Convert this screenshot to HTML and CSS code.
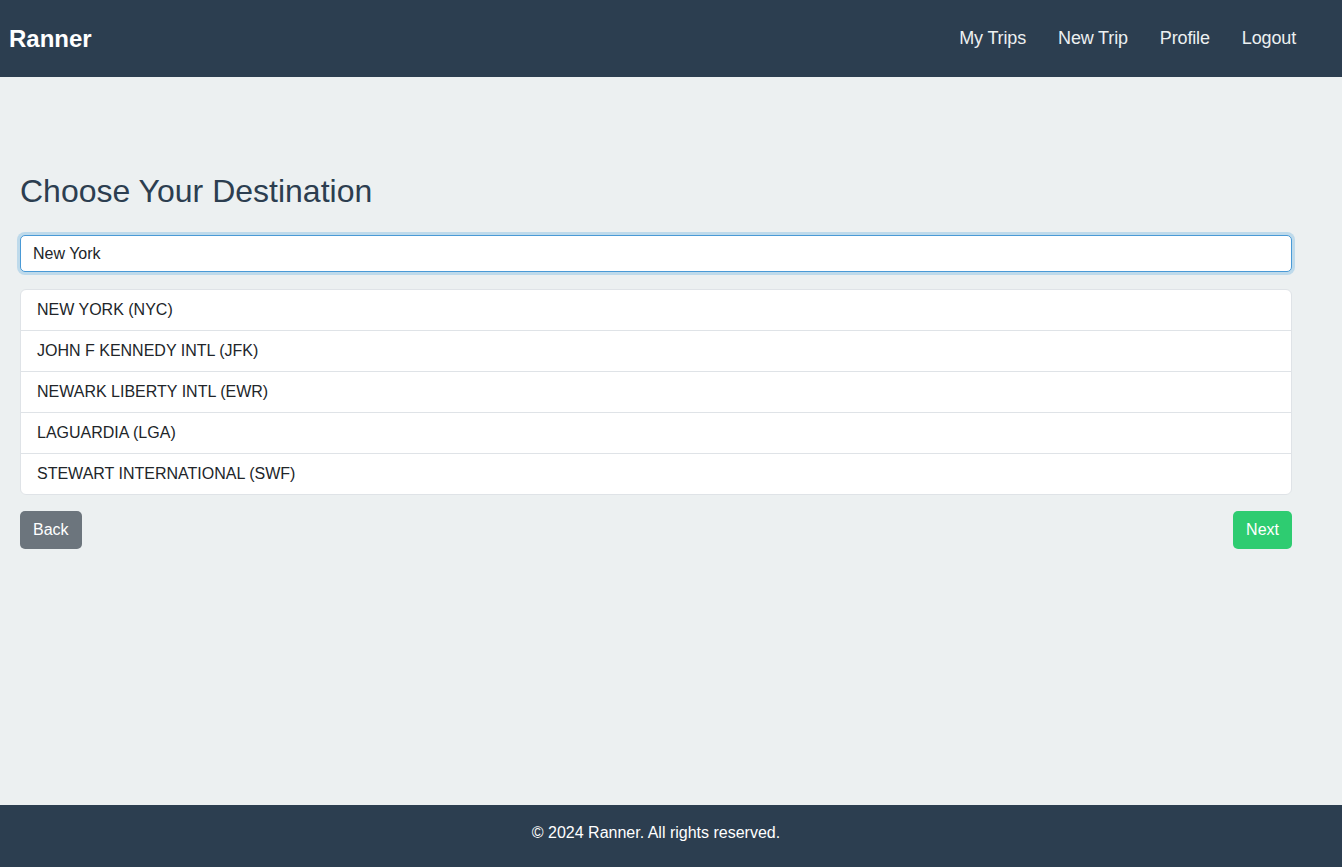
FILE: index.html
```html
<!DOCTYPE html>
<html lang="en">
<head>
<meta charset="utf-8">
<title>Ranner</title>
<link rel="stylesheet" href="styles.css">
</head>
<body>
<header class="topbar">
  <div class="brand">Ranner</div>
  <nav class="nav">
    <a href="#" class="nav-link">My Trips</a>
    <a href="#" class="nav-link">New Trip</a>
    <a href="#" class="nav-link">Profile</a>
    <a href="#" class="nav-link">Logout</a>
  </nav>
</header>
<main class="main">
  <h1 class="title">Choose Your Destination</h1>
  <input class="search" type="text" value="New York">
  <ul class="results">
    <li class="result">NEW YORK (NYC)</li>
    <li class="result">JOHN F KENNEDY INTL (JFK)</li>
    <li class="result">NEWARK LIBERTY INTL (EWR)</li>
    <li class="result">LAGUARDIA (LGA)</li>
    <li class="result">STEWART INTERNATIONAL (SWF)</li>
  </ul>
  <div class="actions">
    <button class="btn btn-back">Back</button>
    <button class="btn btn-next">Next</button>
  </div>
</main>
<footer class="footer">
  <p class="footer-text">© 2024 Ranner. All rights reserved.</p>
</footer>
</body>
</html>
```
FILE: styles.css
```css
* { box-sizing: border-box; }
html, body { margin: 0; padding: 0; }
body {
  font-family: "Liberation Sans", Arial, sans-serif;
  background: #ecf0f1;
  min-height: 100vh;
  display: flex;
  flex-direction: column;
  color: #212529;
}
.topbar {
  height: 77px;
  background: #2c3e50;
  display: flex;
  align-items: center;
  justify-content: space-between;
  padding: 0 30px 0 9px;
}
.brand {
  color: #ffffff;
  font-weight: bold;
  font-size: 24px;
}
.nav { display: flex; }
.nav-link {
  color: #ecf0f1;
  text-decoration: none;
  font-size: 18px;
  letter-spacing: -0.15px;
  padding: 0 16px;
}
.main {
  flex: 1;
  padding: 96px 50px 0 20px;
}
.title {
  margin: 0 0 25px;
  font-size: 32px;
  font-weight: normal;
  color: #2c3e50;
  line-height: 37px;
}
.search {
  display: block;
  width: 100%;
  height: 37px;
  padding: 0 12px;
  font-family: inherit;
  font-size: 16px;
  color: #212529;
  background: #fff;
  border: 1px solid #4a9ad6;
  border-radius: 5px;
  box-shadow: 0 0 0 3px rgba(52, 152, 219, 0.25);
  outline: none;
}
.results {
  list-style: none;
  margin: 17px 0 0;
  padding: 0;
  background: #fff;
  border: 1px solid #dfe3e7;
  border-radius: 6px;
}
.result {
  height: 41px;
  display: flex;
  align-items: center;
  padding: 0 16px;
  font-size: 16px;
  color: #212529;
  border-top: 1px solid #dfe3e7;
}
.result:first-child { border-top: none; height: 40px; }
.actions {
  display: flex;
  justify-content: space-between;
  margin-top: 16px;
}
.btn {
  height: 38px;
  padding: 0 13px;
  border: none;
  border-radius: 5px;
  color: #fff;
  font-family: inherit;
  font-size: 16px;
}
.btn-back { background: #6c757d; }
.btn-next { background: #2ecc71; }
.footer {
  height: 62px;
  background: #2c3e50;
  display: flex;
  align-items: center;
  justify-content: center;
  padding: 0 30px 6px 0;
}
.footer-text {
  margin: 0;
  color: #ffffff;
  font-size: 16px;
}
```
